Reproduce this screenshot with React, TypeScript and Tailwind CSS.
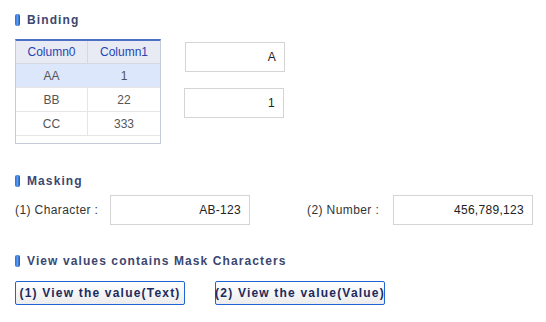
import React from 'react';

const font = { fontFamily: '"Liberation Sans", Arial, sans-serif' };

const Heading: React.FC<{ title: string }> = ({ title }) => (
  <div className="flex items-center h-[14px]">
    <span className="w-[5px] h-[12px] rounded-[2px] bg-gradient-to-r from-[#2a6fd8] via-[#5a9af0] to-[#1a50b0]" />
    <span className="ml-[7px] text-[12px] font-bold text-[#3b4770] tracking-[1.1px]">{title}</span>
  </div>
);

const Input: React.FC<{ value: string; className?: string }> = ({ value, className }) => (
  <div
    className={`border border-[#d4d4d4] bg-white flex items-center justify-end pr-[8px] text-[12px] text-[#222] tracking-[0.3px] ${className ?? ''}`}
  >
    {value}
  </div>
);

const rows = [
  ['AA', '1'],
  ['BB', '22'],
  ['CC', '333'],
];

const App: React.FC = () => {
  return (
    <div className="w-[546px] h-[322px] bg-white pl-[15px] pt-[13px]" style={font}>
      <Heading title="Binding" />

      <div className="flex mt-[12px]">
        {/* grid */}
        <div className="w-[146px] h-[105px] border border-[#c6cad6] border-t-[2px] border-t-[#4d6fc4] bg-white flex flex-col text-[12px]">
          <div className="flex h-[23px] bg-[#e8ebf3] text-[#2545b5] border-b border-[#d4d8e2]">
            <div className="w-[72px] flex items-center justify-center border-r border-[#d4d8e2]">Column0</div>
            <div className="flex-1 flex items-center justify-center">Column1</div>
          </div>
          {rows.map((r, i) => (
            <div
              key={r[0]}
              className={`flex h-[24px] border-b border-[#e6e6e6] text-[#555] ${i === 0 ? 'bg-[#dde7fb]' : ''}`}
            >
              <div className="w-[72px] flex items-center justify-center border-r border-[#e6e6e6]">{r[0]}</div>
              <div className="flex-1 flex items-center justify-center">{r[1]}</div>
            </div>
          ))}
        </div>

        <div className="ml-[24px] flex flex-col pt-[3px]">
          <Input value="A" className="w-[100px] h-[30px]" />
          <Input value="1" className="w-[100px] h-[30px] mt-[16px] -ml-[1px]" />
        </div>
      </div>

      <div className="mt-[30px]">
        <Heading title="Masking" />
      </div>
      <div className="flex items-center mt-[7px] text-[12px] text-[#333] tracking-[0.4px]">
        <span className="w-[95px]">(1) Character :</span>
        <Input value="AB-123" className="w-[140px] h-[30px]" />
        <span className="ml-[57px] w-[86px]">(2) Number :</span>
        <Input value="456,789,123" className="w-[140px] h-[30px]" />
      </div>

      <div className="mt-[29px]">
        <Heading title="View values contains Mask Characters" />
      </div>
      <div className="flex mt-[13px]">
        {['(1) View the value(Text)', '(2) View the value(Value)'].map((t, i) => (
          <button
            key={t}
            className={`w-[170px] h-[24px] border border-[#1f63d4] rounded-[2px] bg-gradient-to-b from-white to-[#ececec] text-[12px] font-bold text-[#1c2a5e] tracking-[1.2px] flex items-center justify-center whitespace-nowrap ${i === 1 ? 'ml-[30px]' : ''}`}
          >
            {t}
          </button>
        ))}
      </div>
    </div>
  );
};

export default App;
